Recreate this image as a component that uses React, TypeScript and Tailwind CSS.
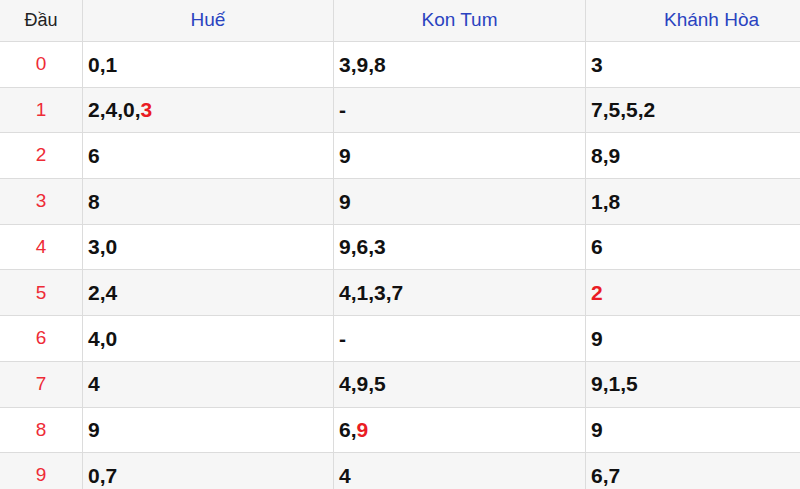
import React from "react";

type Part = { t: string; hot?: boolean };

const rows: { head: string; cols: Part[][] }[] = [
    { head: "0", cols: [[{ t: "0,1" }], [{ t: "3,9,8" }], [{ t: "3" }]] },
    { head: "1", cols: [[{ t: "2,4,0," }, { t: "3", hot: true }], [{ t: "-" }], [{ t: "7,5,5,2" }]] },
    { head: "2", cols: [[{ t: "6" }], [{ t: "9" }], [{ t: "8,9" }]] },
    { head: "3", cols: [[{ t: "8" }], [{ t: "9" }], [{ t: "1,8" }]] },
    { head: "4", cols: [[{ t: "3,0" }], [{ t: "9,6,3" }], [{ t: "6" }]] },
    { head: "5", cols: [[{ t: "2,4" }], [{ t: "4,1,3,7" }], [{ t: "2", hot: true }]] },
    { head: "6", cols: [[{ t: "4,0" }], [{ t: "-" }], [{ t: "9" }]] },
    { head: "7", cols: [[{ t: "4" }], [{ t: "4,9,5" }], [{ t: "9,1,5" }]] },
    { head: "8", cols: [[{ t: "9" }], [{ t: "6," }, { t: "9", hot: true }], [{ t: "9" }]] },
    { head: "9", cols: [[{ t: "0,7" }], [{ t: "4" }], [{ t: "6,7" }]] },
];

const provinces = ["Huế", "Kon Tum", "Khánh Hòa"];

const App: React.FC = () => {
    return <div className="w-[800px] h-[489px] overflow-hidden bg-white" style={{ fontFamily: '"Liberation Sans", Arial, sans-serif' }}>
        <div className="w-[837px]">
            <div className="flex h-[42px] bg-[#f6f6f6] border-b border-[#dcdcdc]">
                <div className="w-[83px] shrink-0 border-r border-[#dcdcdc] flex items-center justify-center text-[18px] text-[#222]">
                    Đầu
                </div>
                {provinces.map((p, i) => (
                    <div key={p} className={`flex items-center justify-center text-[19px] text-[#2a43c0] ${i === 0 ? "w-[251px]" : "w-[252px]"} shrink-0 border-r border-[#dcdcdc]`}>
                        {p}
                    </div>
                ))}
            </div>
            {rows.map((r, idx) => (
                <div key={r.head} className={`flex h-[45.7px] border-b border-[#dcdcdc] ${idx % 2 === 1 ? "bg-[#f6f6f6]" : "bg-white"}`}>
                    <div className="w-[83px] shrink-0 border-r border-[#dcdcdc] flex items-center justify-center text-[19px] text-[#ee2b36]">
                        {r.head}
                    </div>
                    {r.cols.map((c, i) => (
                        <div key={i} className={`${i === 0 ? "w-[251px]" : "w-[252px]"} shrink-0 border-r border-[#dcdcdc] flex items-center pl-[5px] text-[21px] font-bold text-[#111]`}>
                            {c.map((part, j) => (
                                <span key={j} className={part.hot ? "text-[#ea1c24]" : ""}>{part.t}</span>
                            ))}
                        </div>
                    ))}
                </div>
            ))}
        </div>
    </div>
}

export default App;
